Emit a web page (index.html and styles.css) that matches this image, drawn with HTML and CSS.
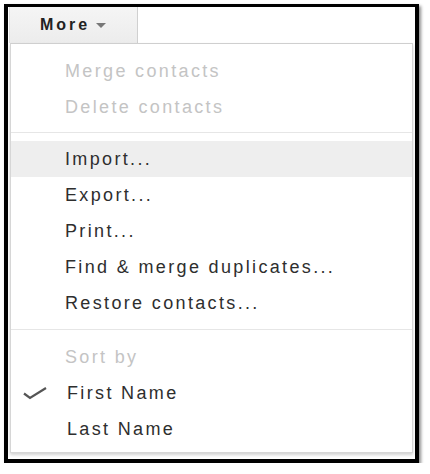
FILE: index.html
```html
<!DOCTYPE html>
<html>
<head>
<meta charset="utf-8">
<link rel="stylesheet" href="styles.css">
</head>
<body>
<div class="frame">
  <div class="button">
    <span class="label">More</span>
    <svg class="arrow" width="10" height="5" viewBox="0 0 10 5"><path d="M0 0 L10 0 L5 5 Z" fill="#777"/></svg>
  </div>
  <div class="menu">
    <div class="item disabled">Merge contacts</div>
    <div class="item disabled">Delete contacts</div>
    <div class="sep"></div>
    <div class="item hover">Import...</div>
    <div class="item">Export...</div>
    <div class="item">Print...</div>
    <div class="item">Find &amp; merge duplicates...</div>
    <div class="item">Restore contacts...</div>
    <div class="sep sep2"></div>
    <div class="item disabled">Sort by</div>
    <div class="item checked">
      <svg class="check" width="24" height="14" viewBox="0 0 24 14"><path d="M1 7.5 L7 12 L23 2" fill="none" stroke="#555" stroke-width="2.2"/></svg>
      First Name
    </div>
    <div class="item last">Last Name</div>
  </div>
</div>
</body>
</html>
```

FILE: styles.css
```css
html, body {
  margin: 0;
  padding: 0;
  background: #fff;
}
.frame {
  margin: 4px 0 0 4px;
  width: 403px;
  height: 452px;
  border-style: solid;
  border-color: #000;
  border-width: 3px 4px 4px 4px;
  padding: 0 2px;
  box-shadow: 2px 2px 3px rgba(0,0,0,0.45);
  background: #fff;
  font-family: "Liberation Sans", Arial, sans-serif;
  box-sizing: content-box;
}
.button {
  display: flex;
  align-items: center;
  width: 97px;
  height: 36px;
  padding-left: 30px;
  box-sizing: content-box;
  background: linear-gradient(#f5f5f5, #ececec);
  border-right: 1px solid #d0d0d0;
  border-left: 1px solid #e0e0e0;
  margin-left: -1px;
}
.label {
  font-weight: bold;
  font-size: 16px;
  letter-spacing: 3px;
  color: #222;
}
.arrow {
  margin-left: 6px;
  margin-top: 1px;
}
.menu {
  border: 1px solid #d6d6d6;
  border-top-color: #cfcfcf;
  box-shadow: 0 2px 3px rgba(0,0,0,0.18);
  padding: 9px 0 6px 0;
  height: 393px;
  box-sizing: content-box;
  background: #fff;
}
.item {
  height: 36px;
  display: flex;
  align-items: center;
  padding-left: 54px;
  font-size: 18px;
  letter-spacing: 2.35px;
  color: #2e2e2e;
}
.item.disabled {
  color: #c4c4c4;
}
.item.hover {
  background: #eeeeee;
}
.item.checked {
  padding-left: 12px;
}
.item.last {
  padding-left: 56px;
}
.check {
  margin-right: 20px;
}
.sep {
  height: 1px;
  background: #e6e6e6;
  margin: 7px 0 8px 0;
}
.sep.sep2 {
  margin: 8px 0 9px 0;
}
```
